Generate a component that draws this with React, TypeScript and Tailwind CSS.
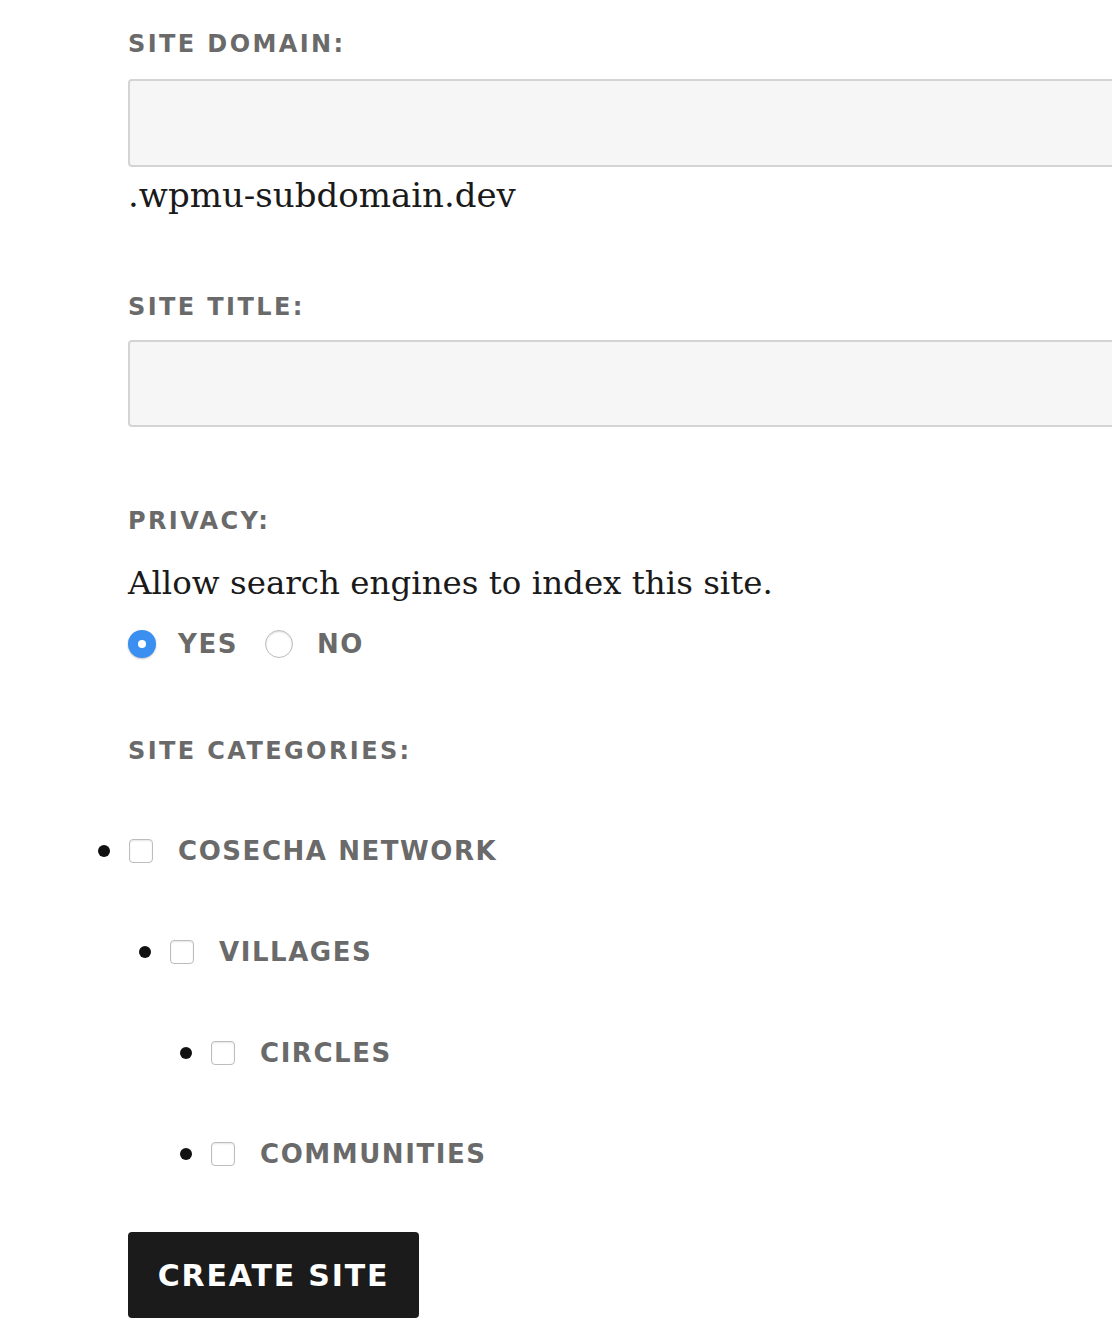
export default function App() {
  const label = "block text-[24px] leading-[28px] font-bold tracking-[0.1em] text-[#6a6a6a] uppercase";
  const sans = { fontFamily: '"DejaVu Sans", sans-serif' };
  const serif = { fontFamily: '"DejaVu Serif", serif' };
  const cats = [
    { name: "Cosecha Network", level: 0 },
    { name: "Villages", level: 1 },
    { name: "Circles", level: 2 },
    { name: "Communities", level: 2 },
  ];

  return (
    <div className="min-h-screen bg-white pl-[128px] pt-[30px] overflow-hidden" style={sans}>
      <label className={label}>Site Domain:</label>
      <div className="mt-[21px] h-[88px] w-[1100px] rounded-l-[4px] border-2 border-[#d4d4d4] bg-[#f6f6f6]" />
      <div className="mt-[6px] text-[34px] leading-[44px] text-[#1a1a1a]" style={serif}>
        .wpmu-subdomain.dev
      </div>

      <label className={`${label} mt-[76px]`}>Site Title:</label>
      <div className="mt-[19px] h-[87px] w-[1100px] rounded-l-[4px] border-2 border-[#d4d4d4] bg-[#f6f6f6]" />

      <label className={`${label} mt-[80px]`}>Privacy:</label>
      <div className="mt-[26px] text-[32.5px] leading-[44px] text-[#1a1a1a]" style={serif}>
        Allow search engines to index this site.
      </div>
      <div className="mt-[24px] flex items-center">
        <span className="flex h-[28px] w-[28px] items-center justify-center rounded-full bg-[#3a8ff0] shadow-[0_1px_2px_rgba(0,0,0,0.25)]">
          <span className="h-[8px] w-[8px] rounded-full bg-white" />
        </span>
        <span className="ml-[22px] text-[26px] leading-[30px] font-bold tracking-[0.06em] text-[#6a6a6a]">YES</span>
        <span className="ml-[27px] h-[28px] w-[28px] rounded-full border border-[#bdbdbd] bg-white shadow-[inset_0_1px_2px_rgba(0,0,0,0.15)]" />
        <span className="ml-[24px] text-[26px] leading-[30px] font-bold tracking-[0.06em] text-[#6a6a6a]">NO</span>
      </div>

      <label className={`${label} mt-[78px]`}>Site Categories:</label>

      <ul className="mt-[71px] flex flex-col gap-[71px]">
        {cats.map((c) => (
          <li
            key={c.name}
            className={`flex items-center h-[30px] ${
              c.level === 0 ? "-ml-[30px]" : c.level === 1 ? "ml-[11px]" : "ml-[52px]"
            }`}
          >
            <span className="h-[12px] w-[12px] rounded-full bg-[#111]" />
            <span className="ml-[19px] h-[24px] w-[24px] rounded-[4px] border border-[#bdbdbd] bg-white shadow-[inset_0_1px_2px_rgba(0,0,0,0.1)]" />
            <span className="ml-[25px] text-[26px] leading-[30px] font-bold tracking-[0.06em] text-[#6a6a6a] uppercase">
              {c.name}
            </span>
          </li>
        ))}
      </ul>

      <button className="mt-[63px] flex h-[86px] w-[291px] items-center justify-center rounded-[4px] bg-[#1b1b1b] text-[30px] font-bold tracking-[0.06em] text-white">
        CREATE SITE
      </button>
    </div>
  );
}
